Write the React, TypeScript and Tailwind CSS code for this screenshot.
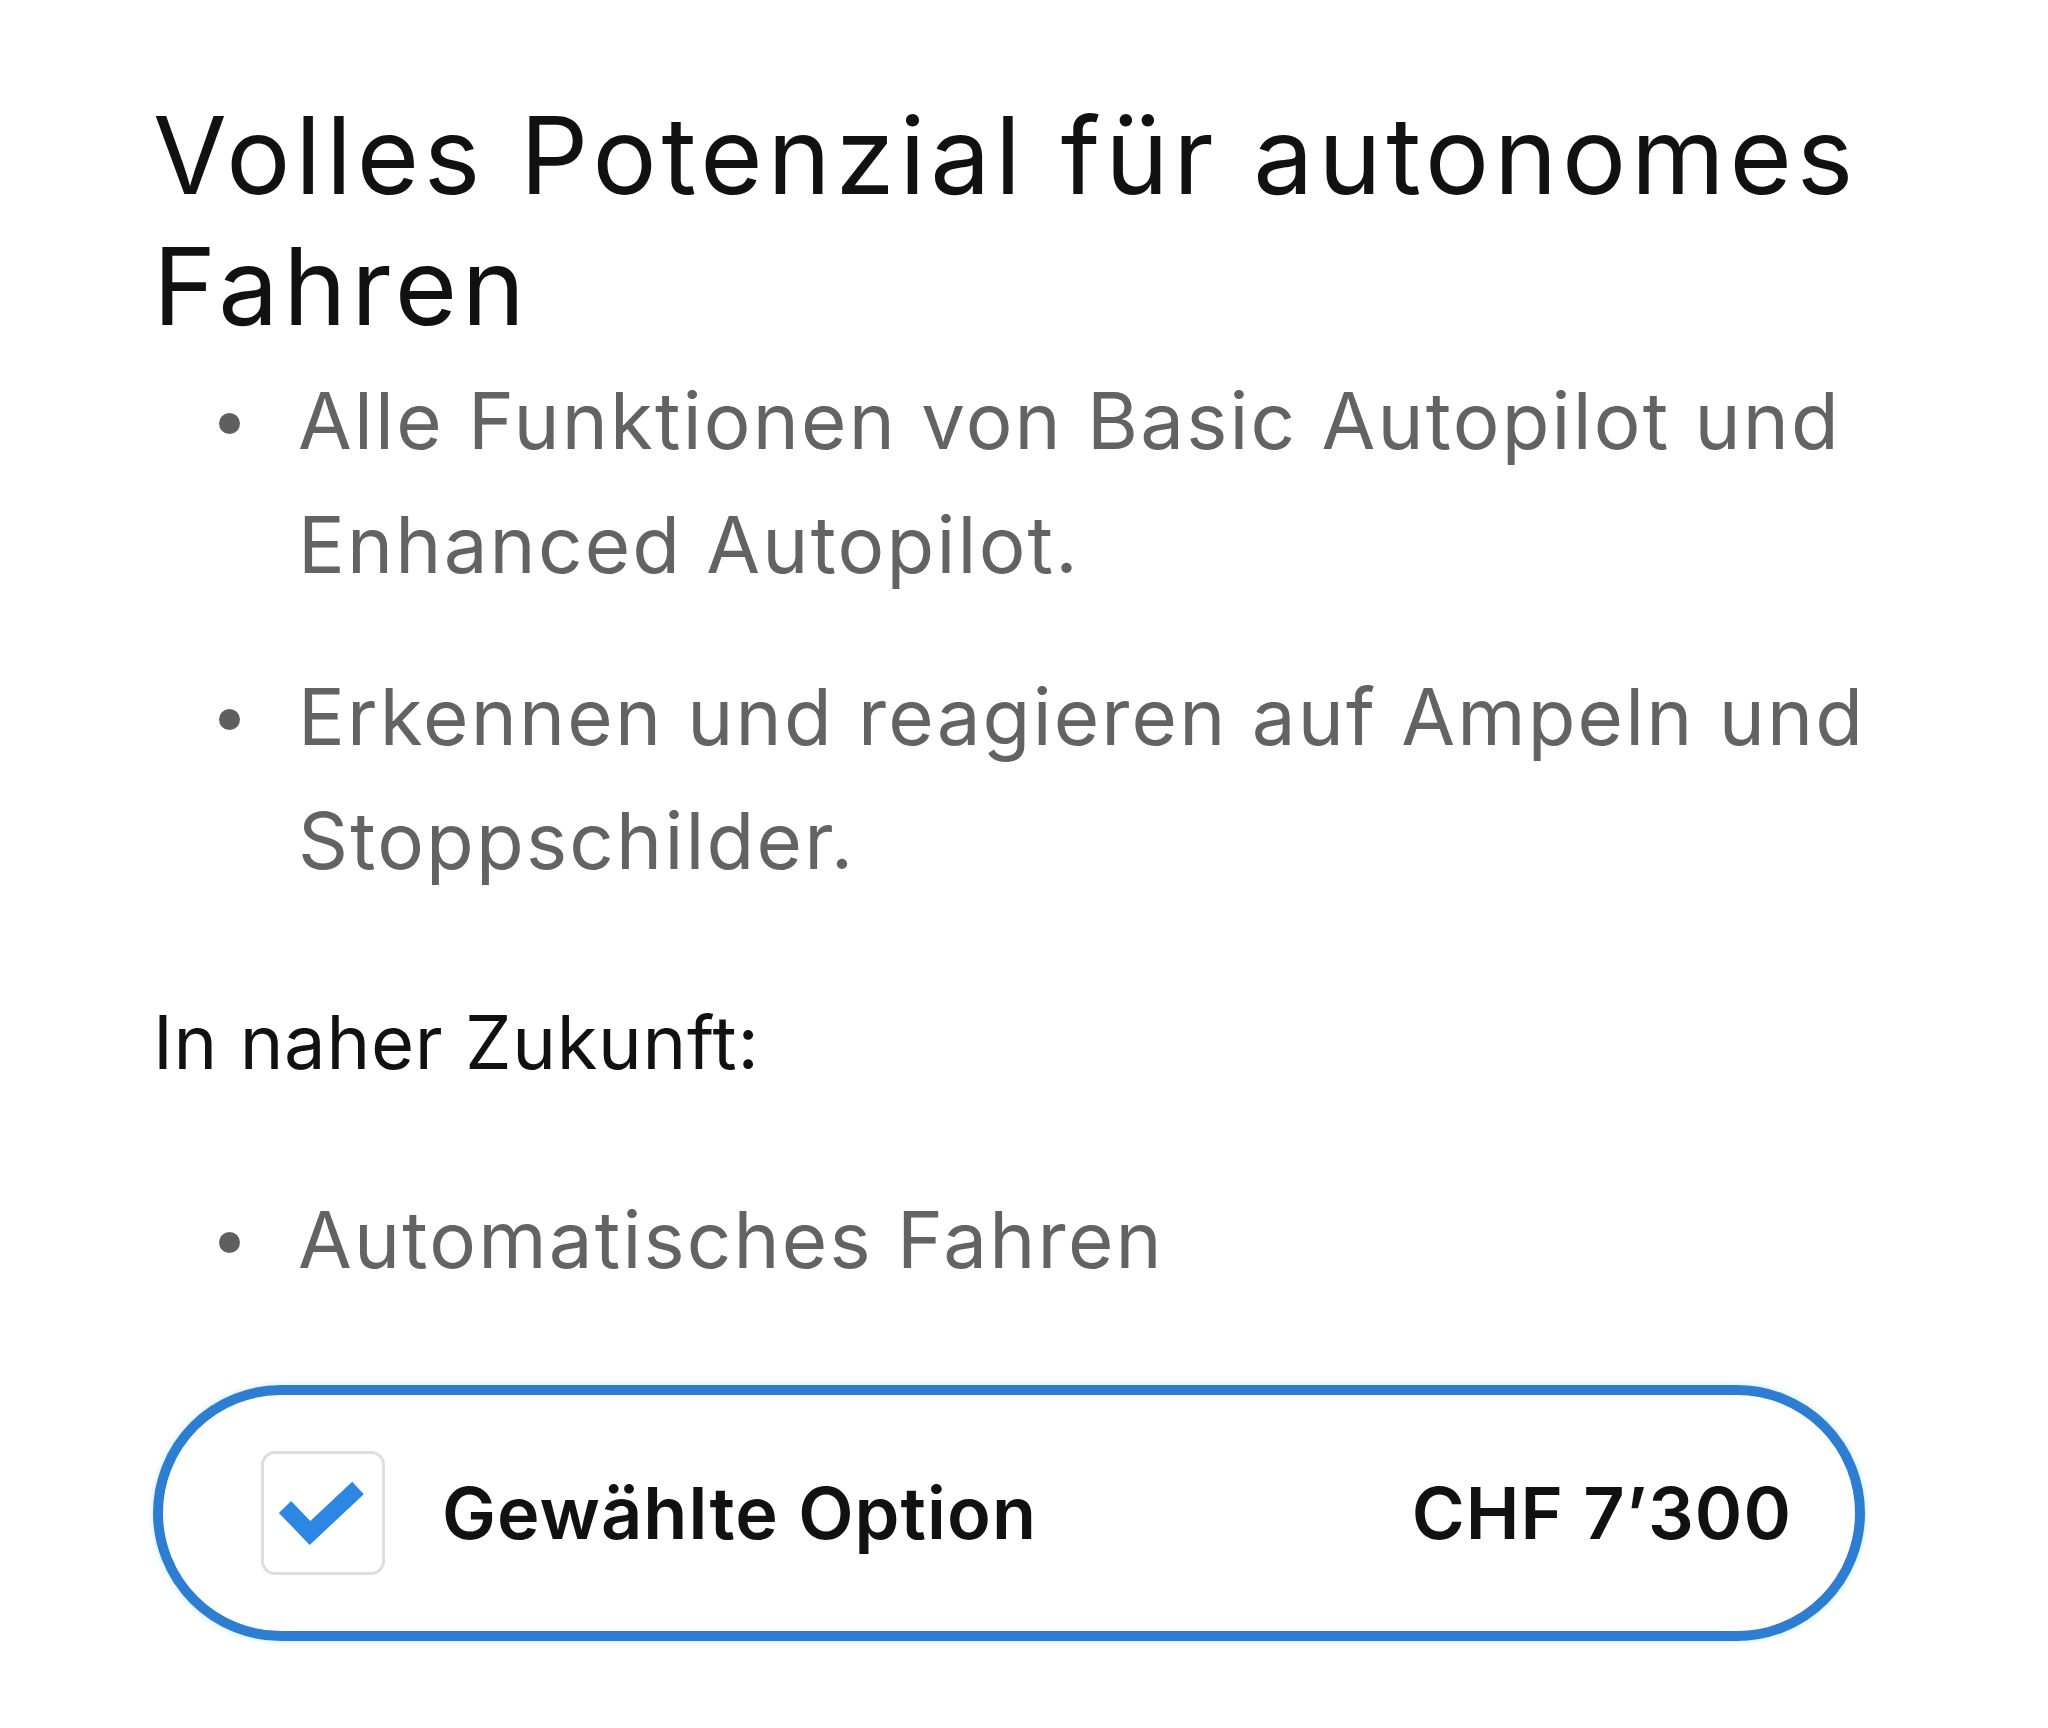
const BULLETS_NOW = [
  'Alle Funktionen von Basic Autopilot und Enhanced Autopilot.',
  'Erkennen und reagieren auf Ampeln und Stoppschilder.',
];

const BULLETS_SOON = ['Automatisches Fahren'];

function Bullet({ text }: { text: string }) {
  return (
    <li className="flex items-start pl-[66px]">
      <span className="mt-[54px] h-[21px] w-[21px] shrink-0 rounded-full bg-[#5f5f5f]" />
      <span className="ml-[58px] text-[78px] leading-[124px] tracking-[0.028em] text-[#636363]">{text}</span>
    </li>
  );
}

function CheckIcon() {
  return (
    <svg width="124" height="124" viewBox="0 0 124 124" className="absolute left-0 top-0">
      <path d="M21 53 L46 79 L94 34" fill="none" stroke="#2b86e4" strokeWidth="17" strokeLinejoin="miter" />
    </svg>
  );
}

export default function App() {
  return (
    <div className="min-h-screen bg-white" style={{ fontFamily: 'Inter, "Noto Sans", sans-serif' }}>
      <div className="ml-[153px] w-[1712px] pt-[90px] pb-[80px]">
        <h1 className="text-[107px] font-normal leading-[131px] tracking-[0.045em] text-[#111111]">
          Volles Potenzial für autonomes Fahren
        </h1>

        <ul className="mt-[7px] flex w-[1760px] flex-col gap-[48px]">
          {BULLETS_NOW.map((b) => (
            <Bullet key={b} text={b} />
          ))}
        </ul>

        <p className="mt-[84px] text-[74px] leading-[111px] tracking-[0.01em] text-[#111111]">In naher Zukunft:</p>

        <ul className="mt-[80px] flex flex-col gap-[48px]">
          {BULLETS_SOON.map((b) => (
            <Bullet key={b} text={b} />
          ))}
        </ul>

        {/* gewählte Option */}
        <div className="mt-[83px] flex h-[256px] items-center rounded-full border-[10px] border-[#2d7dd2] pl-[98px] pr-[63px] shadow-[0_0_6px_rgba(120,210,255,0.45)]">
          <div className="relative h-[124px] w-[124px] shrink-0 rounded-[14px] border-[3px] border-[#dedede]">
            <CheckIcon />
          </div>
          <span className="ml-[57px] text-[72px] font-semibold tracking-[0.015em] text-[#111111]">Gewählte Option</span>
          <span className="ml-auto text-[72px] font-semibold tracking-[0.015em] text-[#111111]">CHF 7’300</span>
        </div>
      </div>
    </div>
  );
}
